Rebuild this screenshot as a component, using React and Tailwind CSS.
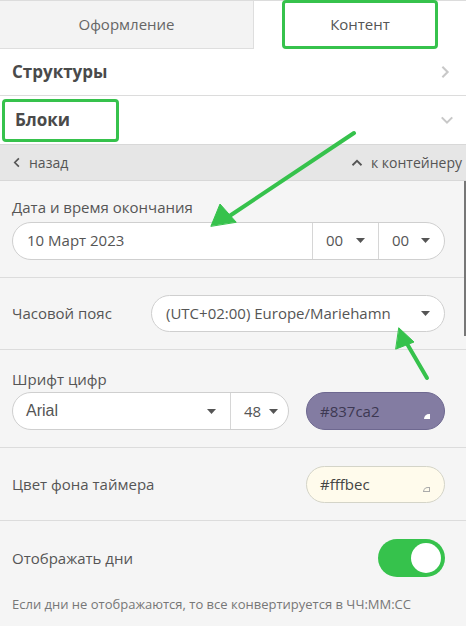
import React, { useState } from "react";

const font = { fontFamily: '"Open Sans", "Noto Sans", sans-serif' };

const Caret = () => (
  <svg width="9" height="5" viewBox="0 0 9 5" className="shrink-0">
    <path d="M0 0h9L4.5 5z" fill="#555" />
  </svg>
);

const Chevron = ({ dir = "right", className = "", color = "#c8c8c8", size = 14 }) => {
  const paths = {
    right: "M5 2l6 6-6 6",
    down: "M2 5l6 6 6-6",
    left: "M10 2L4 8l6 6",
    up: "M2 11l6-6 6 6",
  };
  return (
    <svg width={size} height={size} viewBox="0 0 16 16" className={className}>
      <path d={paths[dir]} fill="none" stroke={color} strokeWidth="2.4" />
    </svg>
  );
};

function Section({ children, className = "" }) {
  return <div className={`border-b border-[#dcdcdc] pl-3 pr-[21px] ${className}`}>{children}</div>;
}

export default function App() {
  const [showDays, setShowDays] = useState(true);

  return (
    <div className="relative w-[466px] h-[626px] overflow-hidden bg-[#f5f5f5] text-[#555]" style={font}>
      {/* tabs */}
      <div className="flex h-[49px] border-t border-[#dcdcdc] bg-white">
        <div className="w-[254px] flex items-center justify-center bg-[#f3f3f3] border-r border-b border-[#dedede] text-[15px] text-[#666]">
          Оформление
        </div>
        <div className="flex-1 flex items-center justify-center text-[15px] text-[#555]">
          <div className="w-[156px] h-[49px] -mt-[1px] flex items-center justify-center border-[3px] border-[#36c24c] rounded-[4px]">
            Контент
          </div>
        </div>
      </div>

      {/* accordion rows */}
      <div className="bg-white">
        <div className="h-[47px] flex items-center justify-between pl-3 pr-[14px] border-b border-[#dcdcdc]">
          <span className="text-[17px] font-bold text-[#4a4a4a]">Структуры</span>
          <Chevron dir="right" />
        </div>
        <div className="h-[48px] flex items-center justify-between pl-[2px] pr-[12px]">
          <div className="w-[117px] h-[43px] flex items-center pl-[10px] border-[3px] border-[#36c24c] rounded-[4px] text-[17px] font-bold text-[#4a4a4a]">
            Блоки
          </div>
          <Chevron dir="down" />
        </div>
      </div>

      {/* nav bar */}
      <div className="h-[37px] flex items-center justify-between pl-3 pr-1 bg-[#e6e6e6] border-t border-[#d8d8d8] border-b text-[14px] text-[#555]">
        <div className="flex items-center gap-[6px]">
          <Chevron dir="left" color="#555" size={11} />
          <span>назад</span>
        </div>
        <div className="flex items-center gap-[8px]">
          <Chevron dir="up" color="#555" size={12} />
          <span>к контейнеру</span>
        </div>
      </div>

      {/* date */}
      <Section className="pt-[15px] pb-[17px]">
        <div className="text-[15px] mb-[3px]">Дата и время окончания</div>
        <div className="flex h-[38px] rounded-full border border-[#cfcfcf] bg-white overflow-hidden text-[15px] text-[#555]">
          <div className="flex-1 flex items-center pl-[14px]">10 Март 2023</div>
          <div className="w-[66px] flex items-center justify-between px-[13px] border-l border-[#d6d6d6]">
            <span>00</span>
            <Caret />
          </div>
          <div className="w-[66px] flex items-center justify-between pl-[13px] pr-[14px] border-l border-[#d6d6d6]">
            <span>00</span>
            <Caret />
          </div>
        </div>
      </Section>

      {/* timezone */}
      <Section className="py-[17px] flex items-center justify-between">
        <span className="text-[15px]">Часовой пояс</span>
        <div className="w-[294px] h-[37px] flex items-center justify-between pl-[14px] pr-[14px] rounded-full border border-[#cfcfcf] bg-white text-[15px]">
          <span>(UTC+02:00) Europe/Mariehamn</span>
          <Caret />
        </div>
      </Section>

      {/* font */}
      <Section className="pt-[18px] pb-[17px]">
        <div className="text-[15px] mb-[2px]">Шрифт цифр</div>
        <div className="flex items-center justify-between">
          <div className="flex w-[277px] h-[38px] rounded-full border border-[#cfcfcf] bg-white overflow-hidden text-[15px]">
            <div className="flex-1 flex items-center justify-between pl-[13px] pr-[14px]" style={{ fontFamily: '"Liberation Sans", Arial, sans-serif' }}>
              <span className="text-[16px]">Arial</span>
              <Caret />
            </div>
            <div className="w-[58px] flex items-center justify-between pl-[13px] pr-[10px] border-l border-[#d6d6d6]">
              <span>48</span>
              <Caret />
            </div>
          </div>
          <div className="relative w-[139px] h-[38px] flex items-center pl-[13px] rounded-full border border-[#6e6890] bg-[#837ca2] text-[15px] text-[#3d3852]">
            #837ca2
            <span className="absolute right-[14px] bottom-[10px] w-[6px] h-[5px] rounded-tl-full bg-white" />
          </div>
        </div>
      </Section>

      {/* bg color */}
      <Section className="pt-[18px] pb-[17px] flex items-center justify-between">
        <span className="text-[15px]">Цвет фона таймера</span>
        <div className="relative w-[139px] h-[37px] flex items-center pl-[13px] rounded-full border border-[#d4d4c8] bg-[#fffbec] text-[15px] text-[#444]">
          #fffbec
          <span className="absolute right-[14px] bottom-[10px] w-[7px] h-[5px] rounded-tl-full border border-[#aaa]" />
        </div>
      </Section>

      {/* show days */}
      <div className="pl-3 pr-[21px] pt-[18px]">
        <div className="flex items-center justify-between">
          <span className="text-[15px]">Отображать дни</span>
          <button
            onClick={() => setShowDays((v) => !v)}
            className={`w-[67px] h-[38px] rounded-full p-[4px] flex ${showDays ? "bg-[#36c24c] justify-end" : "bg-[#ccc] justify-start"}`}
          >
            <span className="w-[30px] h-[30px] rounded-full bg-white" />
          </button>
        </div>
        <div className="mt-[18px] text-[13px] text-[#777]">
          Если дни не отображаются, то все конвертируется в ЧЧ:ММ:СС
        </div>
      </div>

      {/* scrollbar thumb */}
      <div className="absolute right-0 top-[181px] w-[2px] h-[155px] bg-[#777]" />

      {/* annotation arrows */}
      <svg className="absolute inset-0 pointer-events-none" width="466" height="626">
        <g stroke="#36c24c" strokeWidth="4" strokeLinecap="round" fill="#36c24c">
          <line x1="354" y1="133" x2="228" y2="217" />
          <polygon points="211,226 220,204 236,222" strokeWidth="1" strokeLinejoin="round" />
          <line x1="427" y1="378" x2="406" y2="342" />
          <polygon points="399,328 414,342 396,349" strokeWidth="1" strokeLinejoin="round" />
        </g>
      </svg>
    </div>
  );
}
